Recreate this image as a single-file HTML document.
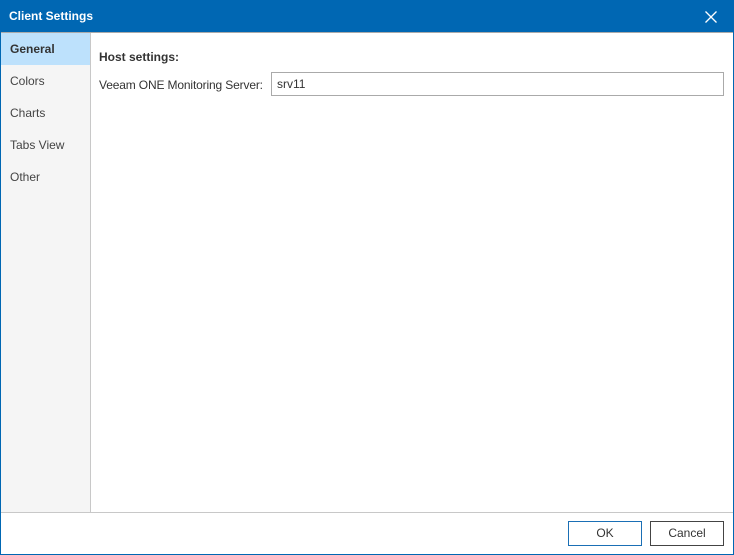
<!DOCTYPE html>
<html><head><style>
*{margin:0;padding:0;box-sizing:border-box}
body{width:734px;height:555px;overflow:hidden;font-family:"Liberation Sans",sans-serif;font-size:12px;color:#333;background:#0067b3;position:relative}
.title{position:absolute;left:9px;top:9px;color:#fff;font-weight:bold;font-size:12px}
.x{position:absolute;left:705px;top:11px;width:12px;height:12px}
.win{position:absolute;left:1px;top:32px;width:732px;height:522px;background:#fff;border-top:1px solid #aaa}
.side{position:absolute;left:0;top:0;width:90px;height:479px;background:#f5f5f5;border-right:1px solid #c8c8c8}
.it{height:32px;line-height:32px;padding-left:9px;color:#444}
.sel{background:#bde1fc;font-weight:bold;color:#333}
.foot{position:absolute;left:0;top:479px;width:732px;border-top:1px solid #c8c8c8;height:42px;background:#fff}
.btn{position:absolute;top:8px;width:74px;height:25px;border:1px solid #444;text-align:center;line-height:23px;background:#fff}
</style></head><body>
<div class="title">Client Settings</div>
<svg class="x" viewBox="0 0 12 12"><path d="M0.5 0.5L11.5 11.5M11.5 0.5L0.5 11.5" stroke="#fff" stroke-width="1.3"/></svg>
<div class="win">
<div class="side">
<div class="it sel">General</div>
<div class="it">Colors</div>
<div class="it">Charts</div>
<div class="it">Tabs View</div>
<div class="it">Other</div>
</div>
<div style="position:absolute;left:98px;top:17px;font-weight:bold">Host settings:</div>
<div style="position:absolute;left:98px;top:45px;letter-spacing:-0.15px">Veeam ONE Monitoring Server:</div>
<div style="position:absolute;left:270px;top:39px;width:453px;height:24px;border:1px solid #aaa;padding-left:5px;line-height:22px">srv11</div>
<div class="foot">
<div class="btn" style="left:567px;border-color:#1a6fb5">OK</div>
<div class="btn" style="left:649px">Cancel</div>
</div>
</div>
</body></html>
